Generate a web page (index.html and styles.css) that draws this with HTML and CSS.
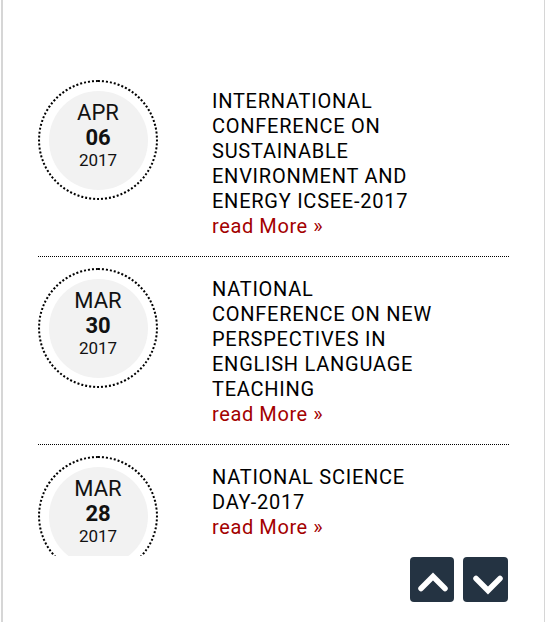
FILE: index.html
```html
<!DOCTYPE html>
<html lang="en">
<head>
<meta charset="utf-8">
<title>Events</title>
<link rel="stylesheet" href="styles.css">
</head>
<body>
<div class="frame">
  <div class="viewport">
    <ul class="events">
      <li class="event">
        <div class="date-ring">
          <div class="date-disc">
            <span class="month">APR</span>
            <span class="day">06</span>
            <span class="year">2017</span>
          </div>
        </div>
        <div class="info">
          <p class="title">INTERNATIONAL CONFERENCE ON SUSTAINABLE ENVIRONMENT AND ENERGY ICSEE-2017</p>
          <a class="more" href="#">read More »</a>
        </div>
      </li>
      <li class="event">
        <div class="date-ring">
          <div class="date-disc">
            <span class="month">MAR</span>
            <span class="day">30</span>
            <span class="year">2017</span>
          </div>
        </div>
        <div class="info">
          <p class="title">NATIONAL CONFERENCE ON NEW PERSPECTIVES IN ENGLISH LANGUAGE TEACHING</p>
          <a class="more" href="#">read More »</a>
        </div>
      </li>
      <li class="event">
        <div class="date-ring">
          <div class="date-disc">
            <span class="month">MAR</span>
            <span class="day">28</span>
            <span class="year">2017</span>
          </div>
        </div>
        <div class="info">
          <p class="title">NATIONAL SCIENCE DAY-2017</p>
          <a class="more" href="#">read More »</a>
        </div>
      </li>
    </ul>
  </div>
  <div class="controls">
    <button class="nav-btn up" type="button" aria-label="Previous">
      <svg width="44" height="45" viewBox="0 0 44 45"><polyline points="11,31.5 23,19.5 35,31.5" fill="none" stroke="#fff" stroke-width="5.5" stroke-linecap="round" stroke-linejoin="miter"/></svg>
    </button>
    <button class="nav-btn down" type="button" aria-label="Next">
      <svg width="45" height="45" viewBox="0 0 45 45"><polyline points="13,21.5 25,33.5 37,21.5" fill="none" stroke="#fff" stroke-width="5.5" stroke-linecap="round" stroke-linejoin="miter"/></svg>
    </button>
  </div>
</div>
</body>
</html>
```
FILE: styles.css
```css
html, body {
  margin: 0;
  padding: 0;
  background: #fff;
}
body {
  font-family: Roboto, "Liberation Sans", Arial, sans-serif;
  color: #000;
}
.frame {
  margin-left: 1px;
  width: 541px;
  height: 622px;
  border-left: 2px solid #d6d6d6;
  border-right: 1px solid #d6d6d6;
}
.viewport {
  height: 556px;
  overflow: hidden;
}
.events {
  list-style: none;
  margin: 0;
  padding: 69px 0 0 0;
  margin-left: 35px;
  width: 471px;
}
.event {
  display: flex;
  align-items: flex-start;
  padding: 11px 0 17px;
  border-bottom: 1px dotted #000;
}
.date-ring {
  flex: 0 0 auto;
  width: 120px;
  height: 120px;
  box-sizing: border-box;
  border: 2px dotted #000;
  border-radius: 50%;
  display: flex;
  align-items: center;
  justify-content: center;
}
.date-disc {
  width: 99px;
  height: 99px;
  border-radius: 50%;
  background: #f2f2f2;
  box-sizing: border-box;
  padding-top: 9px;
  text-align: center;
  color: #111;
}
.date-disc span {
  display: block;
}
.month {
  font-size: 22px;
  line-height: 25px;
}
.day {
  font-size: 22px;
  font-weight: 700;
  line-height: 25px;
}
.year {
  font-size: 17px;
  line-height: 21px;
}
.info {
  margin-left: 54px;
  margin-top: 9px;
  width: 230px;
  font-size: 20px;
  line-height: 25px;
  letter-spacing: 0.75px;
}
.title {
  margin: 0;
  color: #000;
}
.more {
  color: #a30000;
  text-decoration: none;
  letter-spacing: 0.6px;
}
.controls {
  display: flex;
  justify-content: flex-end;
  gap: 9px;
  margin-top: 1px;
  padding-right: 36px;
}
.nav-btn {
  width: 44px;
  height: 45px;
  padding: 0;
  border: 0;
  border-radius: 4px;
  background: #243342;
  display: flex;
  align-items: center;
  justify-content: center;
  cursor: pointer;
}
.nav-btn.down {
  width: 45px;
}
.nav-btn svg {
  display: block;
}
```
